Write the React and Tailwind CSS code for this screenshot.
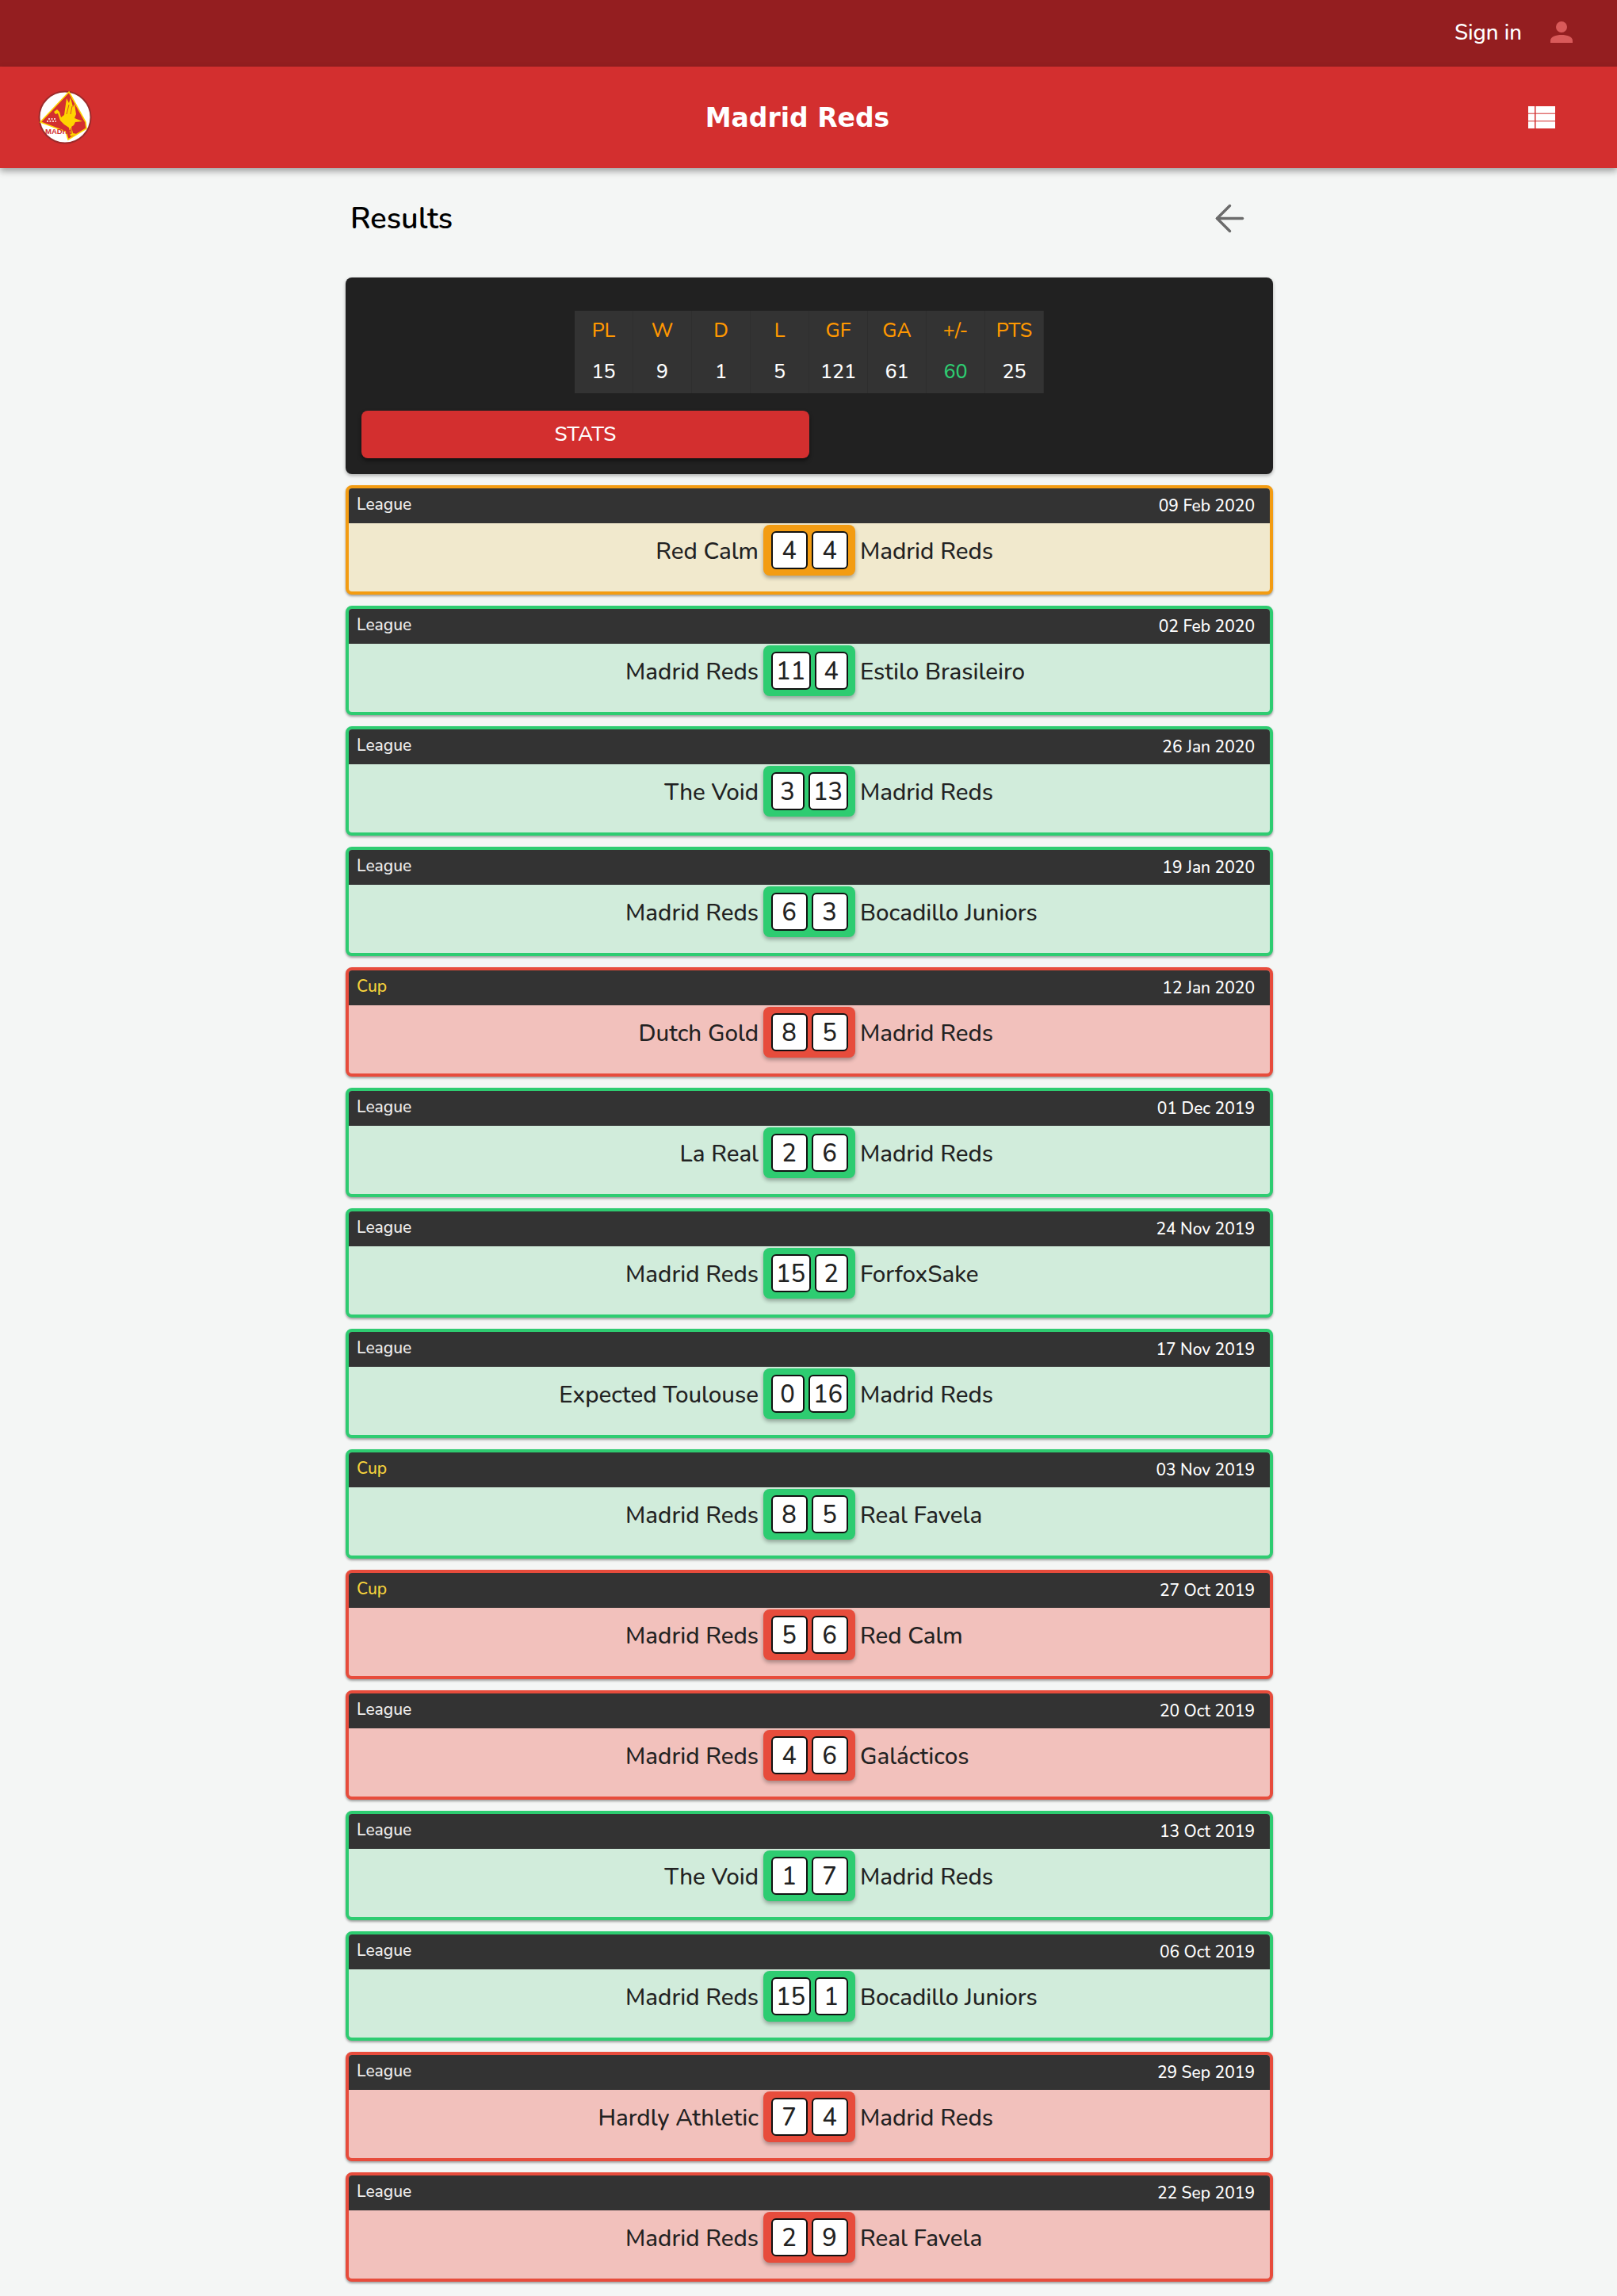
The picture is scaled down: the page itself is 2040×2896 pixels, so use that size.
import React from "react";
import { ArrowLeft } from "lucide-react";

const font = "font-['Nunito','Noto_Sans','Open_Sans',sans-serif]";

const matches = [
  ["League", "09 Feb 2020", "Red Calm", "4", "4", "Madrid Reds", "d"],
  ["League", "02 Feb 2020", "Madrid Reds", "11", "4", "Estilo Brasileiro", "w"],
  ["League", "26 Jan 2020", "The Void", "3", "13", "Madrid Reds", "w"],
  ["League", "19 Jan 2020", "Madrid Reds", "6", "3", "Bocadillo Juniors", "w"],
  ["Cup", "12 Jan 2020", "Dutch Gold", "8", "5", "Madrid Reds", "l"],
  ["League", "01 Dec 2019", "La Real", "2", "6", "Madrid Reds", "w"],
  ["League", "24 Nov 2019", "Madrid Reds", "15", "2", "ForfoxSake", "w"],
  ["League", "17 Nov 2019", "Expected Toulouse", "0", "16", "Madrid Reds", "w"],
  ["Cup", "03 Nov 2019", "Madrid Reds", "8", "5", "Real Favela", "w"],
  ["Cup", "27 Oct 2019", "Madrid Reds", "5", "6", "Red Calm", "l"],
  ["League", "20 Oct 2019", "Madrid Reds", "4", "6", "Galácticos", "l"],
  ["League", "13 Oct 2019", "The Void", "1", "7", "Madrid Reds", "w"],
  ["League", "06 Oct 2019", "Madrid Reds", "15", "1", "Bocadillo Juniors", "w"],
  ["League", "29 Sep 2019", "Hardly Athletic", "7", "4", "Madrid Reds", "l"],
  ["League", "22 Sep 2019", "Madrid Reds", "2", "9", "Real Favela", "l"],
];

const tones = {
  w: { card: "border-[#2ecc71] bg-[#d1ecdb]", score: "bg-[#2ecc71]" },
  l: { card: "border-[#e74c3c] bg-[#f2c1bc]", score: "bg-[#e74c3c]" },
  d: { card: "border-[#f39c12] bg-[#f1e9cd]", score: "bg-[#f39c12]" },
};

const statHead = ["PL", "W", "D", "L", "GF", "GA", "+/-", "PTS"];
const statRow = ["15", "9", "1", "5", "121", "61", "60", "25"];

const Logo = () => (
  <svg width="68" height="68" viewBox="0 0 68 68">
    <circle cx="34" cy="34" r="32.5" fill="#fff" stroke="#9c2b2b" strokeWidth="2" />
    <path d="M39 2 L60 40 L61 48 L38 62 L35 52 L3 40 Z" fill="#d32f2f" stroke="#ffd400" strokeWidth="1.6" />
    {/* liver bird */}
    <path d="M20 27 L24 24 L27 27 L29 34 L33 31 L36 10 L39 16 L41 9 L44 21 L46 17 L48 30 L46 35 L56 39 L47 40 L45 44 L42 46 L44 54 L49 55 L41 58 L39 47 L33 43 L28 38 L25 29 L22 30 Z" fill="#ffd400" />
    <path d="M36 30 L39 18 M41 30 L43 20" stroke="#d32f2f" strokeWidth="0.8" />
    <path d="M11 39 h12 M13 36 h9" stroke="#fff" strokeWidth="1.6" strokeDasharray="2 1.5" />
    <text x="9" y="55" fontSize="9.5" fontWeight="700" fill="#d32f2f" fontFamily="Liberation Sans, sans-serif">MADrid</text>
  </svg>
);

const Score = ({ a, b, tone }) => {
  const cell = (v, other) =>
    v.length > 1 ? "w-[50px]" : other.length > 1 ? "w-[42px]" : "w-[46px]";
  return (
    <div className={`flex h-16 w-[116px] items-center justify-center gap-[5px] rounded-lg shadow-[0_3px_5px_rgba(0,0,0,0.3)] ${tone}`}>
      <div className={`flex h-12 items-center justify-center rounded-md border-2 border-[#111] bg-white pt-0.5 text-[31px] font-medium text-[#222] ${cell(a, b)}`}>{a}</div>
      <div className={`flex h-12 items-center justify-center rounded-md border-2 border-[#111] bg-white pt-0.5 text-[31px] font-medium text-[#222] ${cell(b, a)}`}>{b}</div>
    </div>
  );
};

const MatchCard = ({ m }) => {
  const [comp, date, home, a, b, away, res] = m;
  const tone = tones[res];
  return (
    <div className={`h-[138px] overflow-hidden rounded-lg border-4 shadow-[0_2px_3px_rgba(0,0,0,0.35)] ${tone.card}`}>
      <div className="flex h-11 items-center justify-between bg-[#333] pl-2.5 pr-[19px] text-[21px] font-medium">
        <span className={`pb-0.5 ${comp === "Cup" ? "text-[#f7d33c]" : "text-[#eee]"}`}>{comp}</span>
        <span className="pt-0.5 text-white">{date}</span>
      </div>
      <div className="mt-0.5 grid grid-cols-[1fr_116px_1fr] items-center gap-[6px] text-[29.5px] font-medium text-[#222]">
        <div className="pt-0.5 text-right">{home}</div>
        <Score a={a} b={b} tone={tone.score} />
        <div className="pt-0.5">{away}</div>
      </div>
    </div>
  );
};

export default function App() {
  return (
    <div className={`h-[2896px] overflow-hidden bg-[#f4f6f5] ${font}`}>
      <div className="flex h-[84px] items-center justify-end bg-[#941e20] pr-[56px]">
        <span className="mr-[36px] text-[27.5px] font-medium text-white">Sign in</span>
        <svg className="mb-1" width="28" height="27" viewBox="0 0 28 27" fill="#d95a5a">
          <ellipse cx="14" cy="7" rx="7" ry="7" />
          <path d="M0 27 v-2.5 C0 19 7 17 14 17 S28 19 28 24.5 v2.5 Z" />
        </svg>
      </div>
      <header className="relative flex h-[128px] items-center justify-between bg-[#d32f2f] pl-[48px] pr-[78px] shadow-[0_4px_8px_rgba(0,0,0,0.35)]">
        <Logo />
        <h1 className="mr-[32px] font-['DejaVu_Sans'] text-[33px] font-bold leading-none text-white">Madrid Reds</h1>
        <svg width="34" height="28" viewBox="0 0 34 28" fill="#fff">
          <rect x="0" y="0" width="8" height="8.7" />
          <rect x="9.5" y="0" width="24.5" height="8.7" />
          <rect x="0" y="9.7" width="8" height="8.6" />
          <rect x="9.5" y="9.7" width="24.5" height="8.6" />
          <rect x="0" y="19.3" width="8" height="8.7" />
          <rect x="9.5" y="19.3" width="24.5" height="8.7" />
        </svg>
      </header>
      <main className="ml-[436px] w-[1170px]">
        <div className="flex h-[138px] items-center justify-between pb-3 pl-[6px] pr-[27px]">
          <h2 className="text-[38px] font-semibold text-black">Results</h2>
          <ArrowLeft size={55} strokeWidth={1.5} color="#6b6b6b" />
        </div>
        <div className="h-[248px] rounded-lg bg-[#212121] px-5 pt-[42px] shadow-[0_2px_4px_rgba(0,0,0,0.3)]">
          <div className="mx-auto grid w-[592px] grid-cols-8 bg-[#333] text-center text-[25px] font-medium">
            {statHead.map((h) => (
              <div key={h} className="flex h-[52px] items-center justify-center border-r border-[#2e2e2e] text-[#ff9800]">{h}</div>
            ))}
            {statRow.map((v, i) => (
              <div key={i} className={`flex h-[52px] items-center justify-center border-r border-[#2e2e2e] ${v === "60" ? "text-[#2ecc71]" : "text-white"}`}>{v}</div>
            ))}
          </div>
          <button className="mt-[22px] block h-[60px] w-[565px] rounded-lg bg-[#d32f2f] pb-0.5 text-[26px] font-medium text-white shadow-[0_3px_5px_rgba(0,0,0,0.5)]">STATS</button>
        </div>
        <div className="mt-[14px] flex flex-col gap-[14px]">
          {matches.map((m) => (
            <MatchCard key={m[1]} m={m} />
          ))}
        </div>
      </main>
    </div>
  );
}
